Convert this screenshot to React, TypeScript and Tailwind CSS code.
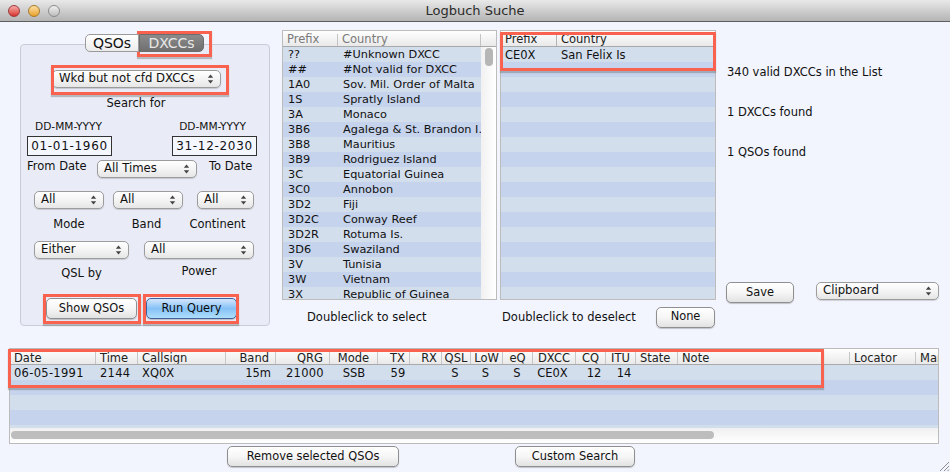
import React from "react";

const F = "font-['DejaVu_Sans','Liberation_Sans',sans-serif]";

function Arrows() {
  return (
    <svg width="7" height="10" viewBox="0 0 7 10" className="shrink-0">
      <path d="M3.5 0.5 L6.2 3.8 H0.8 Z" fill="#444" />
      <path d="M3.5 9.5 L6.2 6.2 H0.8 Z" fill="#444" />
    </svg>
  );
}

function Select({ label, className = "" }: { label: string; className?: string }) {
  return (
    <div
      className={`h-[18px] flex items-center justify-between pl-[6px] pr-[6px] rounded-[5px] border border-[#9c9c9c] bg-gradient-to-b from-[#ffffff] via-[#f4f4f4] to-[#e6e6e6] shadow-[0_1px_1px_rgba(0,0,0,0.15)] text-[11.7px] text-[#111] shrink-0 ${className}`}
    >
      <span className="whitespace-nowrap">{label}</span>
      <Arrows />
    </div>
  );
}

function Button({ label, className = "" }: { label: string; className?: string }) {
  return (
    <div
      className={`h-[21px] flex items-center justify-center rounded-[5px] border border-[#8f8f8f] bg-gradient-to-b from-[#ffffff] via-[#f6f6f6] to-[#e2e2e2] shadow-[0_1px_1px_rgba(0,0,0,0.2)] text-[11.4px] text-[#111] shrink-0 ${className}`}
    >
      {label}
    </div>
  );
}

function Light({ from, to, border }: { from: string; to: string; border: string }) {
  return <div className={`w-[12px] h-[12px] rounded-full border ${from} ${to} ${border} bg-gradient-to-b`} />;
}

const leftRows: [string, string][] = [
  ["??", "#Unknown DXCC"],
  ["##", "#Not valid for DXCC"],
  ["1A0", "Sov. Mil. Order of Malta"],
  ["1S", "Spratly Island"],
  ["3A", "Monaco"],
  ["3B6", "Agalega & St. Brandon I."],
  ["3B8", "Mauritius"],
  ["3B9", "Rodriguez Island"],
  ["3C", "Equatorial Guinea"],
  ["3C0", "Annobon"],
  ["3D2", "Fiji"],
  ["3D2C", "Conway Reef"],
  ["3D2R", "Rotuma Is."],
  ["3D6", "Swaziland"],
  ["3V", "Tunisia"],
  ["3W", "Vietnam"],
  ["3X", "Republic of Guinea"],
];

const zebra = (i: number) => (i % 2 === 0 ? "bg-[#d3deed]" : "bg-[#c5d3ec]");
const HEAD = "h-[16px] shrink-0 flex items-center border-b border-[#a9a9a9] bg-gradient-to-b from-[#ffffff] to-[#e9e9e9] text-[11.5px] pt-[2px]";

function LeftTable() {
  return (
    <div className="w-[215px] h-[270px] border border-[#bcbcbc] flex flex-col overflow-hidden bg-white">
      <div className={`${HEAD} text-[#7a7a7a]`}>
        <div className="w-[55px] pl-[4px] border-r border-[#c4c4c4] h-[12px] flex items-center">Prefix</div>
        <div className="w-[143px] pl-[4px] border-r border-[#c4c4c4] h-[12px] flex items-center">Country</div>
      </div>
      <div className="flex flex-1 min-h-0">
        <div className="w-[198px] overflow-hidden">
          {leftRows.map(([p, c], i) => (
            <div key={p} className={`h-[15px] pt-[2px] flex items-center text-[11.3px] text-[#111] whitespace-nowrap ${zebra(i)}`}>
              <div className="w-[60px] pl-[5px] shrink-0">{p}</div>
              <div>{c}</div>
            </div>
          ))}
        </div>
        <div className="flex-1 bg-gradient-to-r from-[#f1f1f1] to-[#ffffff] pl-[4px] pt-[1px]">
          <div className="w-[8px] h-[18px] rounded-[4px] bg-[#b6b6b6]" />
        </div>
      </div>
    </div>
  );
}

function RightTable() {
  return (
    <div className="w-[216px] h-[270px] border border-[#bcbcbc] flex flex-col overflow-hidden ml-[3px]">
      <div className={`${HEAD} text-[#222]`}>
        <div className="w-[56px] pl-[4px] border-r border-[#b4b4b4] h-[12px] flex items-center">Prefix</div>
        <div className="pl-[4px]">Country</div>
      </div>
      {Array.from({ length: 17 }).map((_, i) => (
        <div key={i} className={`h-[15px] pt-[2px] shrink-0 flex items-center text-[11.5px] text-[#111] ${zebra(i)}`}>
          {i === 0 && (
            <>
              <div className="w-[60px] pl-[4px]">CE0X</div>
              <div>San Felix Is</div>
            </>
          )}
        </div>
      ))}
    </div>
  );
}

const cols = "grid-cols-[86px_42px_88px_50px_54px_48px_32px_32px_29px_32px_30px_43px_30px_30px_42px_172px_66px_24px]";

const headCells: [string, string][] = [
  ["Date", "text-left pl-[4px]"],
  ["Time", "text-left pl-[4px]"],
  ["Callsign", "text-left pl-[4px]"],
  ["Band", "text-right pr-[6px]"],
  ["QRG", "text-right pr-[6px]"],
  ["Mode", "text-center"],
  ["TX", "text-right pr-[4px]"],
  ["RX", "text-right pr-[4px]"],
  ["QSL", "text-center"],
  ["LoW", "text-center"],
  ["eQ", "text-center"],
  ["DXCC", "text-center"],
  ["CQ", "text-center"],
  ["ITU", "text-center"],
  ["State", "text-left pl-[4px]"],
  ["Note", "text-left pl-[4px]"],
  ["Locator", "text-left pl-[4px]"],
  ["Mar", "text-left pl-[4px]"],
];

const valueCells: [string, string][] = [
  ["06-05-1991", "text-left pl-[4px] tracking-[0.3px]"],
  ["2144", "text-left pl-[4px] tracking-[0.3px]"],
  ["XQ0X", "text-left pl-[4px]"],
  ["15m", "text-right pr-[5px]"],
  ["21000", "text-right pr-[6px] tracking-[0.3px]"],
  ["SSB", "text-center"],
  ["59", "text-center pl-[8px] tracking-[0.3px]"],
  ["", ""],
  ["S", "text-center pr-[3px]"],
  ["S", "text-center pr-[3px]"],
  ["S", "text-center pr-[2px]"],
  ["CE0X", "text-center pr-[4px]"],
  ["12", "text-center pl-[6px]"],
  ["14", "text-center pl-[6px]"],
  ["", ""],
  ["", ""],
  ["", ""],
  ["", ""],
];

function QsoTable() {
  return (
    <div className="mx-[9px] w-[930px] h-[96px] border border-[#bcbcbc] flex flex-col overflow-hidden bg-white">
      <div className={`h-[16px] pt-[2px] shrink-0 grid ${cols} items-center border-b border-[#a9a9a9] bg-gradient-to-b from-[#ffffff] to-[#e9e9e9] text-[11.5px] text-[#222] whitespace-nowrap`}>
        {headCells.map(([t, c]) => (
          <div key={t} className={`h-[12px] leading-[12px] border-r border-[#c6c6c6] overflow-hidden ${c}`}>{t}</div>
        ))}
      </div>
      <div className={`h-[15px] shrink-0 grid ${cols} items-center bg-[#d3deed] text-[11.5px] text-[#111] whitespace-nowrap`}>
        {valueCells.map(([t, c], i) => (
          <div key={i} className={c}>{t}</div>
        ))}
      </div>
      <div className="h-[15px] shrink-0 bg-[#c5d3ec]" />
      <div className="h-[15px] shrink-0 bg-[#d3deed]" />
      <div className="h-[15px] shrink-0 bg-[#c5d3ec]" />
      <div className="h-[3px] shrink-0 bg-[#d3deed]" />
      <div className="flex-1 bg-gradient-to-b from-[#f0f0f0] to-[#ffffff] pl-[1px] pt-[3px]">
        <div className="w-[703px] h-[8px] rounded-[4px] bg-[#bdbdbd]" />
      </div>
    </div>
  );
}

function RedBox({ className }: { className: string }) {
  return <div className={`absolute border-[3px] border-[#f8624e] shadow-[0_2px_1px_rgba(90,90,90,0.35)] pointer-events-none ${className}`} />;
}

export default function App() {
  return (
    <div className={`relative w-[950px] h-[472px] overflow-hidden bg-[#f2f5fe] flex flex-col text-[11.5px] text-[#111] ${F}`}>
      {/* Title bar */}
      <div className="h-[22px] shrink-0 relative flex items-center justify-center border-b border-[#5e5e5e] bg-gradient-to-b from-[#e9e9e9] to-[#b4b4b4]">
        <div className="absolute left-[8px] top-[5px] flex gap-[8px]">
          <Light from="from-[#f4a9a9]" to="to-[#d82c2c]" border="border-[#9b3b3b]" />
          <Light from="from-[#fbe0a0]" to="to-[#e9a11f]" border="border-[#a67a2c]" />
          <Light from="from-[#f1f1f1]" to="to-[#bdbdbd]" border="border-[#8b8b8b]" />
        </div>
        <span className="text-[13px] text-[#2b2b2b]">Logbuch Suche</span>
      </div>

      {/* Top area */}
      <div className="flex h-[305px] shrink-0">
        {/* Left panel column */}
        <div className="w-[282px] shrink-0 pl-[20px] pt-[12px]">
          <div className="flex pl-[65px] relative z-10 h-[18px]">
            <div className="w-[54px] h-[18px] flex items-center justify-center rounded-l-[5px] border border-[#9a9a9a] bg-gradient-to-b from-[#ffffff] to-[#ececec] text-[14px] text-[#111]">QSOs</div>
            <div className="w-[65px] h-[18px] flex items-center justify-center rounded-r-[5px] border border-[#6c6c6c] bg-gradient-to-b from-[#8b8b8b] to-[#6f6f6f] text-[14px] text-[#e8e8e8]">DXCCs</div>
          </div>
          <div className="w-[250px] h-[282px] -mt-[8px] border border-[#c9ccd6] rounded-[4px] bg-[#e9ecf6] flex flex-col pt-[25px]">
            <Select label="Wkd but not cfd DXCCs" className="w-[169px] ml-[31px]" />
            <div className="text-center mt-[7px] h-[16px] leading-[16px] pr-[18px]">Search for</div>
            <div className="flex justify-between pl-[14px] pr-[23px] mt-[9px] h-[12px] leading-[12px] text-[10.6px]">
              <span>DD-MM-YYYY</span>
              <span>DD-MM-YYYY</span>
            </div>
            <div className="flex justify-between pl-[6px] pr-[12px] mt-[4px]">
              <div className="w-[85px] h-[20px] border border-[#333] bg-[#f5f7ff] flex items-center justify-center text-[12px] tracking-[0.7px]">01-01-1960</div>
              <div className="w-[85px] h-[20px] border border-[#333] bg-[#f5f7ff] flex items-center justify-center text-[12px] tracking-[0.7px]">31-12-2030</div>
            </div>
            <div className="flex items-center pl-[6px] mt-[4px] h-[18px]">
              <span className="w-[70px] -mt-[4px]">From Date</span>
              <Select label="All Times" className="w-[100px]" />
              <span className="ml-[12px] -mt-[4px]">To Date</span>
            </div>
            <div className="flex pl-[13px] mt-[13px]">
              <Select label="All" className="w-[70px]" />
              <Select label="All" className="w-[70px] ml-[9px]" />
              <Select label="All" className="w-[57px] ml-[14px]" />
            </div>
            <div className="flex pl-[13px] mt-[7px] h-[16px] leading-[16px]">
              <span className="w-[70px] text-center">Mode</span>
              <span className="w-[70px] ml-[9px] text-center pr-[3px]">Band</span>
              <span className="w-[57px] ml-[6px] text-center whitespace-nowrap">Continent</span>
            </div>
            <div className="flex pl-[13px] mt-[9px]">
              <Select label="Either" className="w-[95px]" />
              <Select label="All" className="w-[110px] ml-[15px]" />
            </div>
            <div className="flex pl-[13px] mt-[5px] h-[16px] leading-[16px]">
              <span className="w-[95px] text-center mt-[1px]">QSL by</span>
              <span className="w-[110px] ml-[15px] text-center -mt-[1px]">Power</span>
            </div>
            <div className="flex pl-[25px] mt-[18px] gap-[9px]">
              <Button label="Show QSOs" className="w-[91px]" />
              <div className="w-[91px] h-[21px] flex items-center justify-center rounded-[5px] border border-[#3f5f9f] bg-gradient-to-b from-[#d3e6fb] via-[#85c1f6] to-[#aedefb] shadow-[0_1px_1px_rgba(0,0,0,0.2)] text-[11.4px] text-[#0c0c0c] shrink-0">Run Query</div>
            </div>
          </div>
        </div>

        {/* Lists */}
        <div className="w-[434px] shrink-0 pt-[8px] flex flex-col">
          <div className="flex shrink-0">
            <LeftTable />
            <RightTable />
          </div>
          <div className="flex shrink-0 items-center h-[27px] pt-[7px]">
            <span className="ml-[25px] w-[195px] whitespace-nowrap mt-[2px]">Doubleclick to select</span>
            <span className="whitespace-nowrap mt-[2px]">Doubleclick to deselect</span>
            <Button label="None" className="w-[59px] ml-auto mr-[1px] h-[20px]" />
          </div>
        </div>

        {/* Right info */}
        <div className="flex-1 pl-[11px] pt-[42px] flex flex-col whitespace-nowrap">
          <div className="h-[16px] leading-[16px]">340 valid DXCCs in the List</div>
          <div className="h-[16px] leading-[16px] mt-[24px]">1 DXCCs found</div>
          <div className="h-[16px] leading-[16px] mt-[24px]">1 QSOs found</div>
          <div className="flex mt-[122px] -ml-[1px] items-start">
            <Button label="Save" className="w-[68px]" />
            <Select label="Clipboard" className="w-[123px] ml-[22px]" />
          </div>
        </div>
      </div>

      {/* QSO table */}
      <div className="mt-[21px]">
        <QsoTable />
      </div>

      {/* Bottom buttons */}
      <div className="flex pl-[227px] mt-[2px]">
        <Button label="Remove selected QSOs" className="w-[172px]" />
        <Button label="Custom Search" className="w-[120px] ml-[116px]" />
      </div>

      {/* Resize grip */}
      <svg width="12" height="12" viewBox="0 0 12 12" className="absolute right-0 bottom-0">
        <path d="M11 2 L2 11 M11 6 L6 11 M11 9.5 L9.5 11" stroke="#8d8d8d" strokeWidth="1" />
      </svg>

      {/* Annotation boxes */}
      <RedBox className="left-[137px] top-[31px] w-[75px] h-[26px]" />
      <RedBox className="left-[51px] top-[65px] w-[178px] h-[30px]" />
      <RedBox className="left-[43px] top-[294px] w-[98px] h-[30px]" />
      <RedBox className="left-[143px] top-[294px] w-[96px] h-[30px]" />
      <RedBox className="left-[500px] top-[32px] w-[216px] h-[39px]" />
      <RedBox className="left-[8px] top-[349px] w-[816px] h-[39px]" />
    </div>
  );
}
